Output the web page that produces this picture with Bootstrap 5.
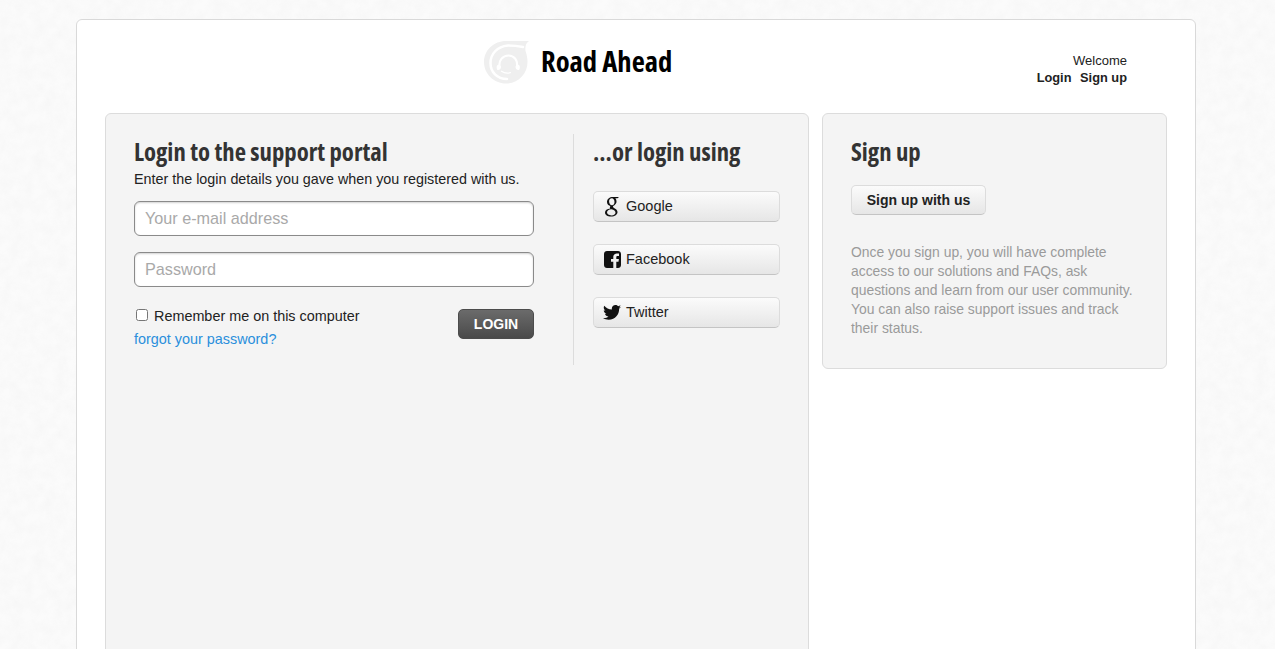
<!DOCTYPE html>
<html lang="en">
<head>
<meta charset="UTF-8">
<meta name="viewport" content="width=device-width, initial-scale=1.0">
<title>Road Ahead</title>
<link rel="stylesheet" href="https://cdn.jsdelivr.net/npm/bootstrap@5.3.0/dist/css/bootstrap.min.css">
<style>
html, body { height: 100%; overflow: hidden; }
body {
  background-color: #fbfbfb;
  background-image: url("data:image/svg+xml,%3Csvg xmlns='http://www.w3.org/2000/svg' width='400' height='400'%3E%3Cfilter id='n'%3E%3CfeTurbulence type='fractalNoise' baseFrequency='.09' numOctaves='3' stitchTiles='stitch'/%3E%3CfeColorMatrix values='0 0 0 0 .6 0 0 0 0 .6 0 0 0 0 .6 .12 0 0 0 -.03'/%3E%3C/filter%3E%3Crect width='400' height='400' filter='url(%23n)'/%3E%3C/svg%3E");
  font-family: "Liberation Sans", Arial, sans-serif;
  font-size: 14px;
  color: #222;
}
.page-wrap {
  width: 1120px;
  height: 800px;
  margin: 19px 0 0 76px;
  padding: 0 28px;
  background: #fff;
  border: 1px solid #d9d9d9;
  border-radius: 6px;
}
.top-head { height: 93px; }
.brand-mark { left: 407px; top: 21px; position: absolute; }
.brand-name {
  left: 464px; top: 21px; position: absolute;
  font-family: "Open Sans", sans-serif;
  font-stretch: 75%;
  font-weight: 700;
  font-size: 28.6px;
  line-height: 40px;
  color: #000;
  white-space: nowrap;
}
.top-links { right: 68px; top: 32px; position: absolute; font-size: 13px; line-height: 17px; text-align: right; }
.top-links a { color: #222; font-weight: 700; font-size: 12.8px; text-decoration: none; margin-left: 5px; }
.panel-box {
  background: #f4f4f4;
  border: 1px solid #dcdcdc;
  border-radius: 6px;
}
.panel-main { width: 704px; height: 700px; padding: 20px 28px; }
.panel-side { width: 345px; height: 256px; padding: 20px 28px; }
.login-col { width: 440px; height: 231px; border-right: 1px solid #dcdcdc; }
.social-col { padding-left: 19px; width: 206px; }
.sec-title {
  font-family: "Open Sans", sans-serif;
  font-stretch: 75%;
  font-weight: 700;
  font-size: 24.7px;
  line-height: 36px;
  margin: 0;
  color: #333;
  white-space: nowrap;
}
.intro-line { font-size: 14.33px; line-height: 18px; margin: 0 0 13px; }
.field-box {
  display: block;
  width: 400px;
  height: 35px;
  padding: 0 10px;
  margin-bottom: 16px;
  border: 1px solid #8a8a8a;
  border-radius: 6px;
  background: #fff;
  box-shadow: inset 0 1px 2px rgba(0,0,0,.18);
  font-size: 16.2px;
  font-family: inherit;
}
.field-box::placeholder { color: #a9a9a9; opacity: 1; }
.login-foot { width: 400px; margin-top: 22px; }
.remember-row { font-size: 14.4px; line-height: 20px; margin-top: -3px; }
.remember-row input { width: 12px; height: 12px; margin: 0 6px 0 2px; vertical-align: 0; }
.forgot-link { color: #2a8fdc; text-decoration: none; font-size: 14.4px; line-height: 20px; display: block; margin-top: 3px; }
.btn-login {
  width: 76px; height: 30px; padding: 0;
  font-size: 14px; font-weight: 700; color: #fff;
  border: 1px solid #4c4c4c; border-radius: 5px;
  background: linear-gradient(#6b6b6b, #4a4a4a);
}
.btn-login:hover { color: #fff; background: #4a4a4a; border-color: #4c4c4c; }
.btn-plain {
  display: flex; align-items: center;
  height: 31px; padding: 0;
  font-size: 14.5px; color: #222;
  border: 1px solid #dcdcdc; border-bottom-color: #c4c4c4; border-radius: 5px;
  background: linear-gradient(#fbfbfb, #e6e6e6);
}
.social-list { padding-top: 5px; }
.btn-social { width: 187px; margin-bottom: 22px; }
.soc-icon { width: 32px; display: flex; justify-content: center; padding-left: 4px; flex-shrink: 0; }
.btn-signup { justify-content: center; width: 135px; height: 30px; font-weight: 700; font-size: 14px; margin-top: 15px; }
.side-note { color: #9a9a9a; font-size: 13.9px; line-height: 19px; margin: 28px 0 0; }
</style>
</head>
<body>
<div class="page-wrap position-relative">
  <div class="top-head">
    <svg class="brand-mark" width="46" height="44" viewBox="0 0 46 44">
      <path fill="#efefef" d="M22 0H45C42 2 41 5 41.500 10 43 14 43.500 18 43.500 21 43.500 33 34 42.500 22 42.500 10 42.500 0 33 0 21 0 9 10 0 22 0Z"/>
      <path fill="none" stroke="#fff" stroke-width="2.500" stroke-linecap="round" d="M39 6C34 5 28 4.500 24 4.500 13 5.500 6.500 13 6.500 22 6.500 31 13 38 23 38"/>
      <path fill="none" stroke="#fff" stroke-width="2.200" d="M15.500 26C14.500 19 19 14.500 24.500 14.500 30 14.500 34 19 33 26"/>
      <path fill="#fff" d="M13 24.500C14.500 23.500 17 24 17 26 17 28 15 29.500 13.500 29 12.500 28 12.500 25.500 13 24.500ZM35.500 24.500C34 23.500 31.500 24 31.500 26 31.500 28 33.500 29.500 35 29 36 28 36 25.500 35.500 24.500Z"/>
      <path fill="none" stroke="#fff" stroke-width="1.200" d="M17 30C20 32 24 32.500 27 31.500"/>
    </svg>
    <div class="brand-name">Road Ahead</div>
    <div class="top-links">Welcome<br><a href="#">Login</a> <a href="#">Sign up</a></div>
  </div>
  <div class="d-flex align-items-start justify-content-between">
    <div class="panel-box panel-main d-flex">
      <div class="login-col">
        <h2 class="sec-title">Login to the support portal</h2>
        <p class="intro-line">Enter the login details you gave when you registered with us.</p>
        <input class="field-box" type="text" placeholder="Your e-mail address">
        <input class="field-box" type="password" placeholder="Password">
        <div class="d-flex justify-content-between login-foot">
          <div class="remember-row">
            <label><input type="checkbox">Remember me on this computer</label>
            <a class="forgot-link" href="#">forgot your password?</a>
          </div>
          <button class="btn btn-login" type="button">LOGIN</button>
        </div>
      </div>
      <div class="social-col">
        <h2 class="sec-title mb-3">...or login using</h2>
        <div class="social-list">
        <a class="btn btn-plain btn-social" href="#"><span class="soc-icon">
          <svg width="16" height="21" viewBox="0 0 16 21"><path fill="#111" fill-rule="evenodd" d="M15 1H9C5.500 1 3 3 3 6 3 8.300 4.500 9.800 6.500 10 5.500 11 5.800 12 6.300 12.500 3 12.700 1 14.300 1 16.500 1 19 3.500 20.500 7 20.500 11 20.500 13.500 18.500 13.500 16 13.500 12.500 9 12.300 9 10.700 9 9.500 12.500 9 12.500 5.500 12.500 4 12 3 11.200 2.300H13.500ZM7.800 2.200C9.500 2.200 10.500 4 10.500 6 10.500 7.800 9.700 9.300 8 9.300 6.200 9.300 5.100 7.300 5.100 5.300 5.100 3.500 6 2.200 7.800 2.200ZM7.500 13.200C10 13.800 11.500 14.800 11.500 16.500 11.500 18.300 10 19.400 7.500 19.400 4.800 19.400 3 18.100 3 16.300 3 14.500 5 13.100 7.500 13.200Z"/></svg>
        </span>Google</a>
        <a class="btn btn-plain btn-social" href="#"><span class="soc-icon">
          <svg width="17" height="17" viewBox="0 0 17 17"><path fill="#111" d="M3 0H14C15.700 0 17 1.300 17 3V14C17 15.700 15.700 17 14 17H12.300V10.800H14.500L14.900 8H12.300V6.500C12.300 5.600 12.600 5.100 13.700 5.100H15V2.600C14.500 2.500 13.700 2.500 12.900 2.500 10.800 2.500 9.300 3.800 9.300 6.100V8H7V10.800H9.300V17H3C1.300 17 0 15.700 0 14V3C0 1.300 1.300 0 3 0Z"/></svg>
        </span>Facebook</a>
        <a class="btn btn-plain btn-social" href="#"><span class="soc-icon">
          <svg width="18" height="15" viewBox="0 0 24 20"><path fill="#111" d="M24 2.400C23.100 2.800 22.200 3.100 21.200 3.200 22.200 2.600 23 1.600 23.400 .4 22.400 1 21.400 1.400 20.200 1.600 19.300.6 18 0 16.600 0 13.900 0 11.700 2.200 11.700 4.900 11.700 5.300 11.800 5.700 11.800 6 7.700 5.800 4.100 3.800 1.700.9 1.200 1.600 1 2.500 1 3.400 1 5.100 1.900 6.600 3.200 7.500 2.400 7.500 1.600 7.300 1 6.900V7C1 9.400 2.700 11.400 4.900 11.800 4.500 11.900 4.100 12 3.600 12 3.300 12 3 12 2.700 11.900 3.300 13.900 5.100 15.300 7.300 15.300 5.600 16.600 3.500 17.400 1.200 17.400.8 17.400.4 17.400 0 17.300 2.200 18.700 4.800 19.500 7.500 19.500 16.600 19.500 21.500 12 21.500 5.500V4.900C22.500 4.200 23.300 3.300 24 2.400Z"/></svg>
        </span>Twitter</a>
        </div>
      </div>
    </div>
    <div class="panel-box panel-side">
      <h2 class="sec-title">Sign up</h2>
      <a class="btn btn-plain btn-signup" href="#">Sign up with us</a>
      <p class="side-note">Once you sign up, you will have complete access to our solutions and FAQs, ask questions and learn from our user community. You can also raise support issues and track their status.</p>
    </div>
  </div>
</div>
<script src="https://cdn.jsdelivr.net/npm/bootstrap@5.3.0/dist/js/bootstrap.bundle.min.js"></script>
</body>
</html>
